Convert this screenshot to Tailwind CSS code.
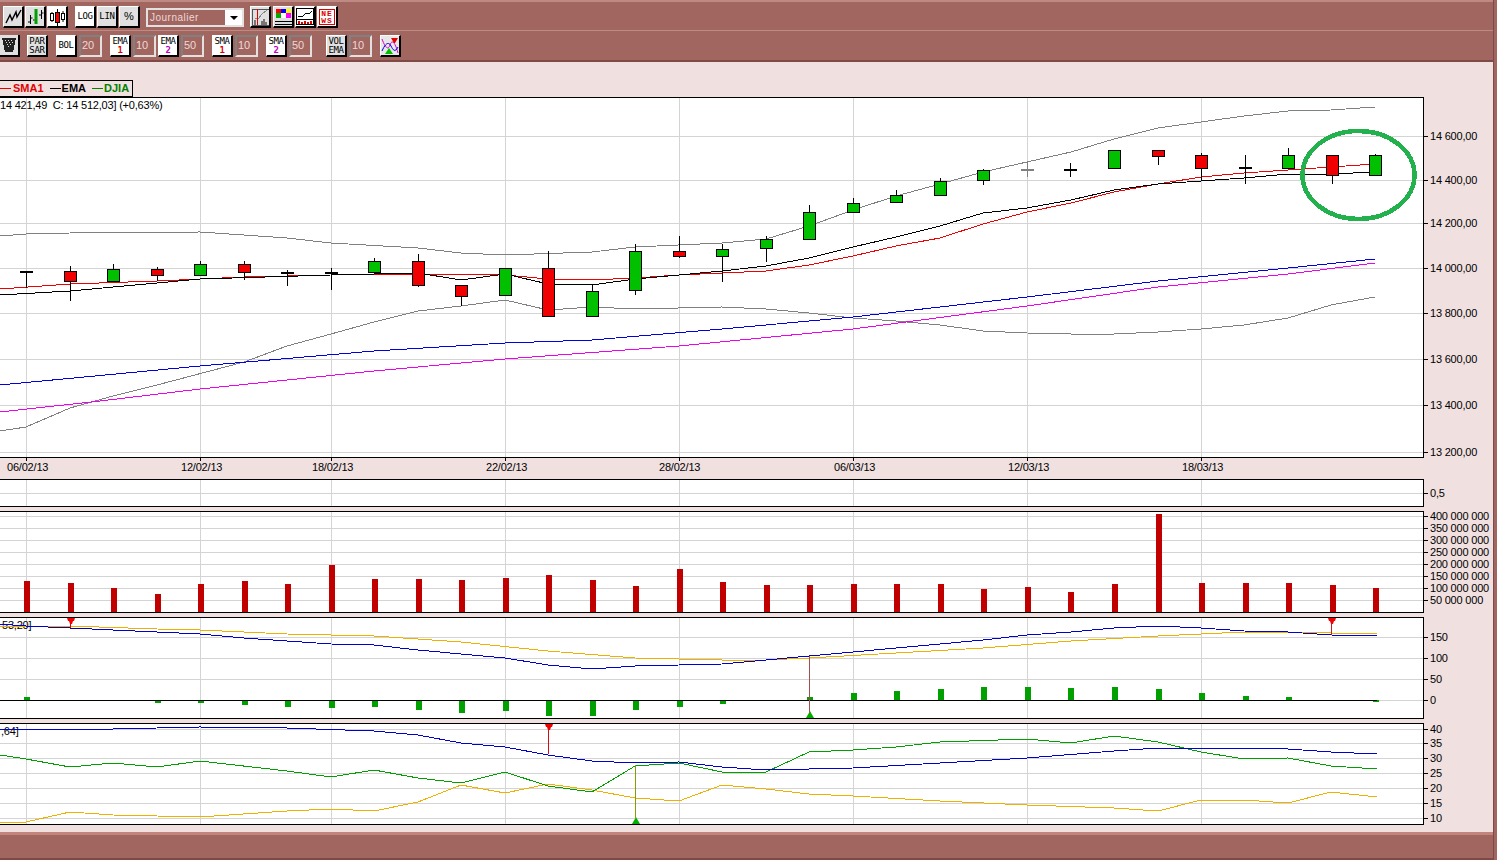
<!DOCTYPE html>
<html lang="fr">
<head>
  <meta charset="UTF-8" />
  <title>Graphique DJIA</title>
  <script src="https://cdn.jsdelivr.net/npm/@tailwindcss/browser@4"></script>
</head>
<body class="bg-[#f0e0e0] font-['Liberation_Sans',sans-serif] overflow-hidden">
  <div class="w-[1497px] h-[860px] flex overflow-hidden">
    <div class="w-[1493px] flex flex-col">

      <!-- toolbar 1 -->
      <div class="h-[30px] shrink-0 bg-[#a1665f] border-t-2 border-t-[#c08a84] flex items-start pt-[4px] pl-[3px]">
        <button class="w-[21px] h-[22px] bg-[#e0e0e0] border-t border-l border-t-white border-l-white border-r-2 border-b-2 border-r-black border-b-black flex items-center justify-center">
          <svg width="17" height="15" viewBox="0 0 17 15" fill="none" stroke="#000" stroke-width="1.4"><path d="M1 14 L5 6 L7 11 L11 3 L12 8 L16 1" /></svg>
        </button>
        <button class="ml-[1px] w-[21px] h-[22px] bg-[#e0e0e0] border-t border-l border-t-white border-l-white border-r-2 border-b-2 border-r-black border-b-black flex items-center justify-center">
          <svg width="17" height="17" viewBox="0 0 17 17" fill="none" stroke="#000"><path d="M3.5 7v9M1 14h2.5M3.5 10h2M14.5 2v9M12 7h2.5M14.5 5h2" /><path d="M9 1v15" stroke="#00a000" stroke-width="3" /><path d="M6 12h1.5" /></svg>
        </button>
        <button class="ml-[1px] w-[21px] h-[22px] bg-white border-t border-l border-t-white border-l-white border-r-2 border-b-2 border-r-black border-b-black flex items-center justify-center">
          <svg width="17" height="18" viewBox="0 0 17 18" fill="none" stroke="#000"><path d="M3 4v10M14 3v11M8.5 1v17" /><rect x="1.5" y="5.5" width="3" height="7" fill="#fff" /><rect x="6.5" y="4.5" width="4" height="10" fill="#f00" /><rect x="12.5" y="5.5" width="3" height="6" fill="#fff" /></svg>
        </button>
        <button class="ml-[7px] w-[21px] h-[22px] bg-white border-t border-l border-t-white border-l-white border-r-2 border-b-2 border-r-black border-b-black font-['DejaVu_Sans_Mono',monospace] text-[9px] tracking-[-0.5px] text-black">LOG</button>
        <button class="ml-[1px] w-[21px] h-[22px] bg-[#e0e0e0] border-t border-l border-t-white border-l-white border-r-2 border-b-2 border-r-black border-b-black font-['DejaVu_Sans_Mono',monospace] text-[9px] tracking-[-0.2px] text-black">LIN</button>
        <button class="ml-[1px] w-[21px] h-[22px] bg-[#e0e0e0] border-t border-l border-t-white border-l-white border-r-2 border-b-2 border-r-black border-b-black text-[11px] text-black">%</button>
        <div class="ml-[6px] mt-[2px] w-[98px] h-[19px] border-2 border-[#e4e0e0] bg-[#a1665f] flex">
          <span class="flex-1 pl-[2px] text-[10px] leading-[15px] tracking-[0.5px] text-[#ecd8d8]">Journalier</span>
          <span class="w-[17px] bg-white flex items-center justify-center">
            <svg width="8" height="4" viewBox="0 0 8 4"><path d="M0 0h8L4 4z" fill="#000" /></svg>
          </span>
        </div>
        <button class="ml-[6px] w-[21px] h-[22px] bg-[#e0e0e0] border-t border-l border-t-white border-l-white border-r-2 border-b-2 border-r-black border-b-black flex items-center justify-center">
          <svg width="17" height="18" viewBox="0 0 17 18" fill="none" shape-rendering="crispEdges"><path d="M.5 1h16M.5 1v16h16" stroke="#555" /><path d="M3 11l4-1 3-4 5-4" stroke="#888" /><path d="M5.5 1v16" stroke="#e00000" /><path d="M3 17v-5M10 17v-4M12 17v-6M14 17v-3" stroke="#777" stroke-width="2" /></svg>
        </button>
        <button class="ml-[2px] w-[21px] h-[22px] bg-[#e0e0e0] border-t border-l border-t-white border-l-white border-r-2 border-b-2 border-r-black border-b-black flex items-center justify-center">
          <svg width="17" height="18" viewBox="0 0 17 18" shape-rendering="crispEdges"><rect x="1" y="1" width="5" height="4" fill="#f00" /><rect x="6" y="1" width="5" height="4" fill="#00f" /><rect x="11" y="1" width="5" height="4" fill="#ff0" /><rect x="1" y="5" width="5" height="5" fill="#0a0" /><rect x="6" y="5" width="5" height="5" fill="#fff" /><rect x="11" y="5" width="5" height="5" fill="#f0f" /><path d="M0 13h17M0 16h17" stroke="#000" /></svg>
        </button>
        <button class="ml-[1px] w-[21px] h-[22px] bg-white border-t border-l border-t-white border-l-white border-r-2 border-b-2 border-r-black border-b-black flex items-center justify-center">
          <svg width="18" height="17" viewBox="0 0 18 17" fill="none" shape-rendering="crispEdges"><rect x=".5" y=".5" width="17" height="16" stroke="#000" /><path d="M2 9l5-1 3-3 3 1 3-3" stroke="#000" /><path d="M1 11h16" stroke="#000" /><path d="M3 16v-3M6 16v-2M9 16v-3M12 16v-2M15 16v-3" stroke="#e00000" stroke-width="2" /></svg>
        </button>
        <button class="ml-[1px] w-[21px] h-[22px] bg-white border-t border-l border-t-white border-l-white border-r-2 border-b-2 border-r-black border-b-black flex items-center justify-center">
          <span class="w-[16px] h-[16px] border border-[#e00000] flex flex-col items-center justify-center font-['Liberation_Mono',monospace] text-[8px] leading-[7px] font-bold tracking-[1px] text-[#e00000]"><span>NE</span><span>WS</span></span>
        </button>
      </div>

      <!-- toolbar 2 -->
      <div class="h-[32px] shrink-0 bg-[#a1665f] border-t border-t-[#c08a84] border-b-2 border-b-[#7f4a45] flex items-start pt-[4px]">
        <button class="w-[20px] h-[22px] bg-[#e0e0e0] border-r-2 border-b-2 border-r-black border-b-black flex items-center justify-center">
          <svg width="14" height="16" viewBox="0 0 14 16" shape-rendering="crispEdges"><path d="M0 1h14l-3 14H3z" fill="#222" /><path d="M3 3h1v1H3zM6 3h1v1H6zM9 3h1v1H9zM4 5h1v1H4zM7 5h1v1H7zM10 5h1v1h-1zM5 7h1v1H5zM8 7h1v1H8zM6 9h1v1H6z" fill="#ddd" /></svg>
        </button>
        <button class="ml-[7px] w-[21px] h-[22px] bg-[#e0e0e0] border-t border-l border-t-white border-l-white border-r-2 border-b-2 border-r-black border-b-black font-['DejaVu_Sans_Mono',monospace] text-[9px] leading-[9px] tracking-[-0.3px] text-black">PAR<br />SAR</button>
        <button class="ml-[8px] w-[21px] h-[22px] bg-white border-t border-l border-t-white border-l-white border-r-2 border-b-2 border-r-black border-b-black font-['DejaVu_Sans_Mono',monospace] text-[9px] tracking-[-0.5px] text-black">BOL</button>
        <span class="ml-[2px] w-[23px] h-[22px] border-2 border-t-[#808080] border-l-[#808080] border-b-[#e4e0e0] border-r-[#e4e0e0] pl-[1px] text-[11px] leading-[17px] text-[#ecd8d8]">20</span>
        <button class="ml-[8px] w-[21px] h-[22px] bg-white border-t border-l border-t-white border-l-white border-r-2 border-b-2 border-r-black border-b-black font-['DejaVu_Sans_Mono',monospace] text-[9px] leading-[9px] tracking-[-0.5px] text-black">EMA<br /><span class="font-bold text-[#e00000]">1</span></button>
        <span class="ml-[2px] w-[23px] h-[22px] border-2 border-t-[#808080] border-l-[#808080] border-b-[#e4e0e0] border-r-[#e4e0e0] pl-[1px] text-[11px] leading-[17px] text-[#ecd8d8]">10</span>
        <button class="ml-[2px] w-[21px] h-[22px] bg-white border-t border-l border-t-white border-l-white border-r-2 border-b-2 border-r-black border-b-black font-['DejaVu_Sans_Mono',monospace] text-[9px] leading-[9px] tracking-[-0.5px] text-black">EMA<br /><span class="font-bold text-[#c000c0]">2</span></button>
        <span class="ml-[2px] w-[23px] h-[22px] border-2 border-t-[#808080] border-l-[#808080] border-b-[#e4e0e0] border-r-[#e4e0e0] pl-[1px] text-[11px] leading-[17px] text-[#ecd8d8]">50</span>
        <button class="ml-[8px] w-[21px] h-[22px] bg-white border-t border-l border-t-white border-l-white border-r-2 border-b-2 border-r-black border-b-black font-['DejaVu_Sans_Mono',monospace] text-[9px] leading-[9px] tracking-[-0.5px] text-black">SMA<br /><span class="font-bold text-[#e00000]">1</span></button>
        <span class="ml-[2px] w-[23px] h-[22px] border-2 border-t-[#808080] border-l-[#808080] border-b-[#e4e0e0] border-r-[#e4e0e0] pl-[1px] text-[11px] leading-[17px] text-[#ecd8d8]">10</span>
        <button class="ml-[8px] w-[21px] h-[22px] bg-white border-t border-l border-t-white border-l-white border-r-2 border-b-2 border-r-black border-b-black font-['DejaVu_Sans_Mono',monospace] text-[9px] leading-[9px] tracking-[-0.5px] text-black">SMA<br /><span class="font-bold text-[#c000c0]">2</span></button>
        <span class="ml-[2px] w-[23px] h-[22px] border-2 border-t-[#808080] border-l-[#808080] border-b-[#e4e0e0] border-r-[#e4e0e0] pl-[1px] text-[11px] leading-[17px] text-[#ecd8d8]">50</span>
        <button class="ml-[14px] w-[21px] h-[22px] bg-[#e0e0e0] border-t border-l border-t-white border-l-white border-r-2 border-b-2 border-r-black border-b-black font-['DejaVu_Sans_Mono',monospace] text-[9px] leading-[9px] tracking-[-0.5px] text-black">VOL<br />EMA</button>
        <span class="ml-[2px] w-[23px] h-[22px] border-2 border-t-[#808080] border-l-[#808080] border-b-[#e4e0e0] border-r-[#e4e0e0] pl-[1px] text-[11px] leading-[17px] text-[#ecd8d8]">10</span>
        <button class="ml-[8px] w-[21px] h-[22px] bg-[#e8e8e8] border-t border-l border-t-white border-l-white border-r-2 border-b-2 border-r-black border-b-black flex items-center justify-center">
          <svg width="18" height="18" viewBox="0 0 18 18" fill="none"><path d="M1 2c3 8 6 12 8 6s5-3 8 8" stroke="#e000c0" /><path d="M1 14c4-9 7-9 9-5s4 7 7 1" stroke="#0000e0" /><path d="M10 1h7l-3 5h-1z" fill="#e00000" /><path d="M8 11l-4 6h8z" fill="#00c000" /></svg>
        </button>
      </div>

      <!-- legend -->
      <div class="h-[35px] shrink-0 flex items-end">
        <div class="h-[17px] border border-black border-l-0 flex items-center gap-[6px] pr-[3px] text-[11px] leading-none font-bold">
          <span class="flex items-center text-[#e00000]"><i class="w-[11px] h-px bg-[#e00000] mr-[2px]"></i>SMA1</span>
          <span class="flex items-center text-black"><i class="w-[11px] h-px bg-black mr-[1px]"></i>EMA</span>
          <span class="flex items-center text-[#008000]"><i class="w-[11px] h-px bg-[#008000] mr-[1px]"></i>DJIA</span>
        </div>
      </div>

      <!-- panels, drawn in page coordinates from the data below -->
      <svg id="main" class="block shrink-0 tracking-[-0.2px]" width="1493" height="382" viewBox="0 97 1493 382"></svg>
      <svg id="unit" class="block shrink-0 tracking-[-0.2px]" width="1493" height="32" viewBox="0 479 1493 32"></svg>
      <svg id="vol" class="block shrink-0 tracking-[-0.2px]" width="1493" height="106" viewBox="0 511 1493 106"></svg>
      <svg id="macd" class="block shrink-0 tracking-[-0.2px]" width="1493" height="106" viewBox="0 617 1493 106"></svg>
      <svg id="adx" class="block shrink-0 tracking-[-0.2px]" width="1493" height="109" viewBox="0 723 1493 109"></svg>

      <!-- status bar -->
      <div class="flex-1 bg-[#a1665f] border-t-3 border-t-[#c2847c] border-b-2 border-b-[#7f4a45]"></div>
    </div>
    <div class="flex-1 bg-[#a1665f] border-l border-l-[#7f4a45]"></div>
  </div>

  <script>
    const V_GRID = [26, 200, 331, 505, 679, 853, 1027, 1201];
    const X = i => Math.round(26 + i * 43.52);

    function pts(a) {
      return a.map(p => p.join(',')).join(' ');
    }
    function line(a, color) {
      return `<polyline points="${pts(a)}" fill="none" stroke="${color}" shape-rendering="crispEdges" />`;
    }
    function panel(y0, y1, hLines, labels) {
      let s = `<rect x="-2" y="${y0 + .5}" width="1425.5" height="${y1 - y0}" fill="#fff" stroke="#000" shape-rendering="crispEdges" />`;
      for (const y of hLines) s += `<path d="M0 ${y + .5}H1423" stroke="#d4d4d4" shape-rendering="crispEdges" />`;
      for (const x of V_GRID) s += `<path d="M${x + .5} ${y0 + 1}V${y1}" stroke="#d4d4d4" shape-rendering="crispEdges" />`;
      for (const [y, t] of labels) {
        s += `<path d="M1424 ${y + .5}h4" stroke="#000" shape-rendering="crispEdges" />`;
        s += `<text x="1430" y="${y + 4}" font-size="11" fill="#000">${t}</text>`;
      }
      return s;
    }
    function candle(c) {
      const [x, hi, lo, top, bot, col] = c;
      let s = `<path d="M${x + .5} ${hi}V${lo}" stroke="${col === 'g' ? '#808080' : '#000'}" shape-rendering="crispEdges" />`;
      if (col === 'd' || col === 'g') return s + `<rect x="${x - 6}" y="${top}" width="13" height="2" fill="${col === 'g' ? '#808080' : '#000'}" />`;
      const fill = col === 'r' ? '#f00000' : '#00c000';
      return s + `<rect x="${x - 6 + .5}" y="${top + .5}" width="12" height="${bot - top}" fill="${fill}" stroke="#000" shape-rendering="crispEdges" />`;
    }
    function signal(x, y1, y2, down, stem) {
      const fill = down ? '#f00000' : '#00b000';
      const tri = down
        ? `<path d="M${x - 3} ${y1}h8l-1 3h-1l-1 3h-2l-1-3h-1z" fill="${fill}" />`
        : `<path d="M${x + 1} ${y2 - 7}l4 7h-8z" fill="${fill}" />`;
      const line = down
        ? `<path d="M${x + .5} ${y1 + 5}V${y2}" stroke="${stem}" shape-rendering="crispEdges" />`
        : `<path d="M${x + .5} ${y1}V${y2 - 5}" stroke="${stem}" shape-rendering="crispEdges" />`;
      return tri + line;
    }

    // chandeliers : haut, bas, corps haut, corps bas, couleur
    const candles = [
      [271, 288, 271, 0, 'd'], [266, 301, 271, 281, 'r'], [264, 281, 269, 281, 'v'], [267, 281, 269, 275, 'r'],
      [261, 275, 264, 275, 'v'], [261, 280, 264, 272, 'r'], [270, 286, 272, 0, 'd'], [268, 290, 272, 0, 'd'],
      [258, 272, 261, 272, 'v'], [254, 287, 261, 285, 'r'], [285, 306, 285, 296, 'r'], [268, 296, 268, 295, 'v'],
      [251, 317, 268, 316, 'r'], [285, 316, 291, 316, 'v'], [244, 295, 251, 290, 'v'], [236, 258, 251, 256, 'r'],
      [244, 282, 249, 256, 'v'], [236, 262, 239, 248, 'v'], [205, 239, 212, 239, 'v'], [198, 212, 203, 212, 'v'],
      [190, 202, 195, 202, 'v'], [178, 195, 181, 195, 'v'], [169, 185, 170, 180, 'v'], [162, 177, 169, 0, 'g'],
      [163, 177, 169, 0, 'd'], [150, 168, 150, 168, 'v'], [150, 165, 150, 156, 'r'], [153, 180, 155, 168, 'r'],
      [155, 184, 167, 0, 'd'], [148, 168, 155, 168, 'v'], [155, 184, 155, 175, 'r'], [154, 175, 155, 175, 'v']
    ].map((c, i) => [X(i), ...c]);

    const sma1 = [[0,289],[70,284],[157,281],[244,277],[331,275],[418,274],[505,275],[548,279],[592,280],[635,278],[679,275],[722,273],[766,271],[809,265],[853,256],[896,246],[940,238],[983,224],[1027,212],[1071,203],[1114,192],[1158,184],[1201,177],[1244,173],[1288,170],[1331,167],[1375,164]];
    const ema = [[0,295],[70,291],[157,283],[200,279],[331,275],[418,273],[461,280],[505,274],[548,284],[592,285],[635,279],[679,275],[722,271],[766,266],[809,258],[853,247],[896,237],[940,226],[983,213],[1027,208],[1071,200],[1114,190],[1158,184],[1201,181],[1244,178],[1288,174],[1331,174],[1375,172]];
    const bolUp = [[0,236],[26,234],[70,233],[200,232],[287,238],[331,243],[418,248],[461,253],[505,255],[592,252],[635,247],[722,243],[766,239],[809,226],[853,210],[896,196],[940,184],[983,172],[1027,162],[1071,152],[1114,139],[1158,128],[1201,122],[1244,116],[1288,111],[1331,110],[1375,107]];
    const bolLow = [[0,431],[26,427],[70,408],[113,396],[157,385],[244,362],[287,346],[331,334],[374,322],[418,311],[461,306],[505,300],[548,310],[592,307],[635,309],[722,307],[766,309],[809,313],[853,318],[896,321],[940,325],[983,331],[1027,333],[1071,334],[1114,334],[1158,332],[1201,329],[1244,325],[1288,318],[1331,305],[1375,297]];
    const blue = [[0,385],[200,366],[374,351],[505,343],[592,340],[722,329],[853,317],[1027,297],[1158,281],[1288,268],[1375,259]];
    const mag = [[0,412],[100,401],[200,389],[374,371],[505,359],[679,346],[853,329],[1027,306],[1158,287],[1288,274],[1375,263]];

    let s = panel(97, 457, [136, 180, 223, 268, 313, 359, 405, 452], [[136,'14 600,00'],[180,'14 400,00'],[223,'14 200,00'],[268,'14 000,00'],[313,'13 800,00'],[359,'13 600,00'],[405,'13 400,00'],[452,'13 200,00']]);
    s += line(bolUp, '#808080') + line(bolLow, '#808080') + line(blue, '#0000e0') + line(mag, '#f000f0');
    s += line(sma1, '#f00000') + line(ema, '#000');
    s += candles.map(candle).join('');
    s += `<ellipse cx="1358.5" cy="175" rx="56" ry="44" fill="none" stroke="#22b14c" stroke-width="4.5" shape-rendering="crispEdges" />`;
    s += `<text x="0" y="109" font-size="11" xml:space="preserve">14 421,49  C: 14 512,03] (+0,63%)</text>`;
    [['06/02/13',7],['12/02/13',181],['18/02/13',312],['22/02/13',486],['28/02/13',659],['06/03/13',834],['12/03/13',1008],['18/03/13',1182]].forEach(([t, x]) => {
      s += `<text x="${x}" y="471" font-size="11">${t}</text>`;
    });
    V_GRID.forEach(x => s += `<path d="M${x + .5} 458v3" stroke="#000" shape-rendering="crispEdges" />`);
    document.getElementById('main').innerHTML = s;

    document.getElementById('unit').innerHTML = panel(479, 506, [493], [[493,'0,5']]);

    // volume
    const volTop = [581,583,588,594,584,581,584,565,579,579,580,578,575,580,586,569,582,585,585,584,584,584,589,587,592,584,514,583,583,583,585,588];
    let v = panel(511, 612, [516,528,540,552,564,576,588,600], [[516,'400 000 000'],[528,'350 000 000'],[540,'300 000 000'],[552,'250 000 000'],[564,'200 000 000'],[576,'150 000 000'],[588,'100 000 000'],[600,'50 000 000']]);
    volTop.forEach((y, i) => v += `<rect x="${X(i) - 2}" y="${y}" width="6" height="${612 - y}" fill="#c00000" />`);
    document.getElementById('vol').innerHTML = v;

    // MACD
    const macdBlue = [[0,624],[26,626],[70,628],[113,630],[157,632],[200,634],[244,638],[287,641],[331,644],[374,645],[418,650],[461,654],[505,658],[548,665],[592,669],[635,666],[679,665],[722,664],[766,660],[809,656],[853,652],[896,648],[940,644],[983,640],[1027,635],[1071,632],[1114,628],[1158,626],[1201,628],[1244,631],[1288,632],[1331,635],[1377,636]];
    const macdOr = [[0,626],[70,626],[157,629],[200,630],[287,634],[374,636],[461,642],[548,651],[635,658],[722,660],[766,660],[809,658],[896,653],[983,648],[1071,641],[1158,636],[1244,632],[1288,632],[1331,633],[1377,633]];
    const hist = [-3,0,0,3,3,5,7,8,7,10,13,11,16,16,10,7,4,1,-3,-7,-9,-11,-13,-13,-12,-13,-11,-7,-4,-3,0,2];
    let m = panel(617, 718, [637,658,679,700], [[637,'150'],[658,'100'],[679,'50'],[700,'0']]);
    m += `<text x="2" y="629" font-size="11">53,20]</text>`;
    hist.forEach((h, i) => {
      if (h) m += `<rect x="${X(i) - 2}" y="${h < 0 ? 700 + h : 700}" width="6" height="${Math.abs(h)}" fill="#00a000" />`;
    });
    m += `<path d="M0 700.5H1377" stroke="#000" shape-rendering="crispEdges" />`;
    m += line(macdOr, '#f0b000') + line(macdBlue, '#0000d0');
    m += signal(70, 618, 628, true, '#e00000') + signal(1331, 618, 635, true, '#c02020') + signal(809, 656, 718, false, '#a05050');
    document.getElementById('macd').innerHTML = m;

    // ADX
    const adxBlue = [[0,729],[113,729],[157,728],[200,727],[287,728],[374,731],[418,735],[461,743],[505,747],[548,755],[592,761],[635,763],[679,762],[722,767],[766,770],[853,768],[940,763],[1027,758],[1114,751],[1158,748],[1201,748],[1288,749],[1331,752],[1377,754]];
    const adxGreen = [[0,755],[26,759],[70,767],[113,763],[157,767],[200,761],[287,771],[331,777],[374,770],[418,778],[461,783],[505,772],[548,786],[592,792],[635,766],[679,763],[722,772],[766,772],[809,752],[853,750],[896,747],[940,742],[1027,739],[1071,743],[1114,736],[1158,742],[1201,752],[1244,759],[1288,758],[1331,766],[1377,769]];
    const adxOr = [[0,823],[26,822],[70,812],[113,815],[157,816],[200,817],[287,811],[331,809],[374,811],[418,802],[461,785],[505,793],[548,784],[592,790],[635,798],[679,801],[722,785],[766,789],[809,794],[853,796],[940,801],[1027,805],[1114,808],[1158,811],[1201,800],[1244,800],[1288,803],[1331,792],[1377,797]];
    let a = panel(723, 824, [729,743,758,773,788,803,818], [[729,'40'],[743,'35'],[758,'30'],[773,'25'],[788,'20'],[803,'15'],[818,'10']]);
    a += `<text x="1" y="735" font-size="11">,64]</text>`;
    a += line(adxOr, '#f0b000') + line(adxGreen, '#00a000') + line(adxBlue, '#0000d0');
    a += signal(548, 724, 754, true, '#d01010') + signal(635, 765, 824, false, '#80a000');
    document.getElementById('adx').innerHTML = a;
  </script>
</body>
</html>
